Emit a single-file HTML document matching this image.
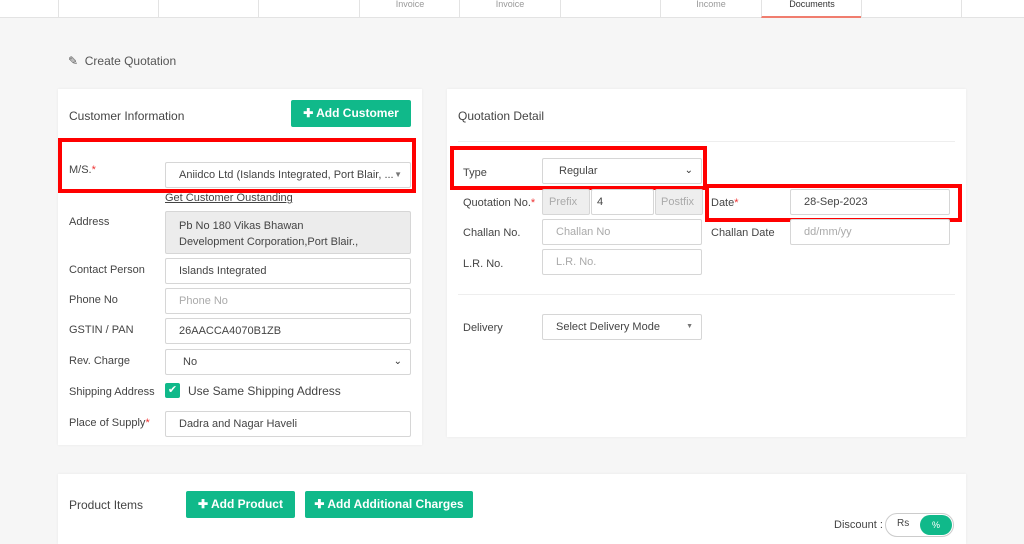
<!DOCTYPE html>
<html><head><meta charset="utf-8"><style>
*{box-sizing:border-box;margin:0;padding:0}
body{width:1024px;height:538px;overflow:hidden;background:#f6f6f6;font-family:"Liberation Sans",sans-serif;font-size:11px;color:#444;position:relative}
.a{position:absolute}
.nav{left:0;top:0;width:1024px;height:18px;background:#fff;border-bottom:1px solid #e3e3e3}
.cell{top:0;height:18px;border-left:1px solid #e3e3e3;width:101px;text-align:center;font-size:9px;color:#999;line-height:8px}
.card{background:#fff;box-shadow:0 0 3px rgba(0,0,0,.06)}
.lbl{font-size:11px;color:#444}
.inp{background:#fff;border:1px solid #d6d6d6;border-radius:2px;height:26px;padding-left:13px;line-height:24px;font-size:11px;color:#444}
.ph{color:#aaa}
.red{border:4px solid #f00}
.star{color:#e33}
.btn{background:#10b98a;color:#fff;font-weight:bold;font-size:12px;border-radius:2px;text-align:center}
.gray{background:#eee}
.chev{position:absolute;right:8px;top:0;font-size:10px;color:#333}
</style></head><body>
<div class="a nav"></div>
<div class="a cell" style="left:58px"></div>
<div class="a cell" style="left:158px"></div>
<div class="a cell" style="left:258px"></div>
<div class="a cell" style="left:359px">Invoice</div>
<div class="a cell" style="left:459px">Invoice</div>
<div class="a cell" style="left:560px"></div>
<div class="a cell" style="left:660px">Income</div>
<div class="a cell" style="left:761px;color:#333;border-bottom:2px solid #f07d6e">Documents</div>
<div class="a cell" style="left:861px"></div>
<div class="a cell" style="left:961px;width:63px"></div>

<div class="a" style="left:68px;top:54px;font-size:12px;color:#555"><span style="font-size:12px">&#9998;</span>&nbsp; Create Quotation</div>

<div class="a card" style="left:58px;top:89px;width:364px;height:356px"></div>
<div class="a card" style="left:447px;top:89px;width:519px;height:348px"></div>
<div class="a card" style="left:58px;top:474px;width:908px;height:70px"></div>

<div class="a" style="left:69px;top:109px;font-size:12px;color:#444">Customer Information</div>
<div class="a btn" style="left:291px;top:100px;width:120px;height:27px;line-height:27px">✚ Add Customer</div>

<div class="a red" style="left:58px;top:138px;width:358px;height:55px"></div>
<div class="a lbl" style="left:69px;top:164px">M/S.<span class="star">*</span></div>
<div class="a inp" style="left:165px;top:162px;width:246px">Aniidco Ltd (Islands Integrated, Port Blair, ...<span class="chev" style="font-size:8px;color:#777">▼</span></div>
<div class="a" style="left:165px;top:192px;text-decoration:underline;color:#444">Get Customer Oustanding</div>

<div class="a lbl" style="left:69px;top:216px">Address</div>
<div class="a inp" style="left:165px;top:211px;width:246px;height:43px;background:#ececec;line-height:16px;padding-top:6px;overflow:hidden">Pb No 180 Vikas Bhawan<br>Development Corporation,Port Blair.,</div>
<div class="a lbl" style="left:69px;top:264px">Contact Person</div>
<div class="a inp" style="left:165px;top:258px;width:246px">Islands Integrated</div>
<div class="a lbl" style="left:69px;top:294px">Phone No</div>
<div class="a inp ph" style="left:165px;top:288px;width:246px">Phone No</div>
<div class="a lbl" style="left:69px;top:324px">GSTIN / PAN</div>
<div class="a inp" style="left:165px;top:318px;width:246px">26AACCA4070B1ZB</div>
<div class="a lbl" style="left:69px;top:355px">Rev. Charge</div>
<div class="a inp" style="left:165px;top:349px;width:246px;padding-left:17px">No<span class="chev">&#8964;</span></div>
<div class="a lbl" style="left:69px;top:386px">Shipping Address</div>
<div class="a" style="left:165px;top:383px;width:15px;height:15px;background:#10b98a;border-radius:2px;color:#fff;font-size:11px;text-align:center;line-height:15px">✔</div>
<div class="a" style="left:188px;top:384px;font-size:12px">Use Same Shipping Address</div>
<div class="a lbl" style="left:69px;top:417px">Place of Supply<span class="star">*</span></div>
<div class="a inp" style="left:165px;top:411px;width:246px">Dadra and Nagar Haveli</div>

<div class="a" style="left:458px;top:109px;font-size:12px">Quotation Detail</div>
<div class="a" style="left:458px;top:141px;width:497px;border-top:1px solid #eee"></div>
<div class="a red" style="left:450px;top:146px;width:257px;height:44px"></div>
<div class="a red" style="left:705px;top:184px;width:257px;height:38px"></div>
<div class="a lbl" style="left:463px;top:167px">Type</div>
<div class="a inp" style="left:542px;top:158px;width:160px;padding-left:16px">Regular<span class="chev">&#8964;</span></div>
<div class="a lbl" style="left:463px;top:197px">Quotation No.<span class="star">*</span></div>
<div class="a inp gray ph" style="left:542px;top:189px;width:48px;padding-left:6px">Prefix</div>
<div class="a inp" style="left:591px;top:189px;width:63px;padding-left:5px">4</div>
<div class="a inp gray ph" style="left:655px;top:189px;width:48px;padding-left:5px">Postfix</div>
<div class="a lbl" style="left:711px;top:197px">Date<span class="star">*</span></div>
<div class="a inp" style="left:790px;top:189px;width:160px;padding-left:13px">28-Sep-2023</div>
<div class="a lbl" style="left:463px;top:227px">Challan No.</div>
<div class="a inp ph" style="left:542px;top:219px;width:160px">Challan No</div>
<div class="a lbl" style="left:711px;top:227px">Challan Date</div>
<div class="a inp ph" style="left:790px;top:219px;width:160px">dd/mm/yy</div>
<div class="a lbl" style="left:463px;top:258px">L.R. No.</div>
<div class="a inp ph" style="left:542px;top:249px;width:160px">L.R. No.</div>
<div class="a" style="left:458px;top:294px;width:497px;border-top:1px solid #eee"></div>
<div class="a lbl" style="left:463px;top:322px">Delivery</div>
<div class="a inp" style="left:542px;top:314px;width:160px">Select Delivery Mode<span class="chev" style="font-size:7px;color:#777">▼</span></div>

<div class="a" style="left:69px;top:498px;font-size:12px">Product Items</div>
<div class="a btn" style="left:186px;top:491px;width:109px;height:27px;line-height:27px">✚ Add Product</div>
<div class="a btn" style="left:305px;top:491px;width:168px;height:27px;line-height:27px">✚ Add Additional Charges</div>
<div class="a" style="left:834px;top:519px;font-size:11px">Discount :</div>
<div class="a" style="left:885px;top:513px;width:69px;height:24px;border:1px solid #ccc;border-radius:12px;background:#fff"></div>
<div class="a" style="left:897px;top:518px;font-size:10px">Rs</div>
<div class="a" style="left:920px;top:515px;width:32px;height:20px;border-radius:10px;background:#10b98a;color:#fff;font-size:9px;text-align:center;line-height:20px">%</div>
</body></html>
